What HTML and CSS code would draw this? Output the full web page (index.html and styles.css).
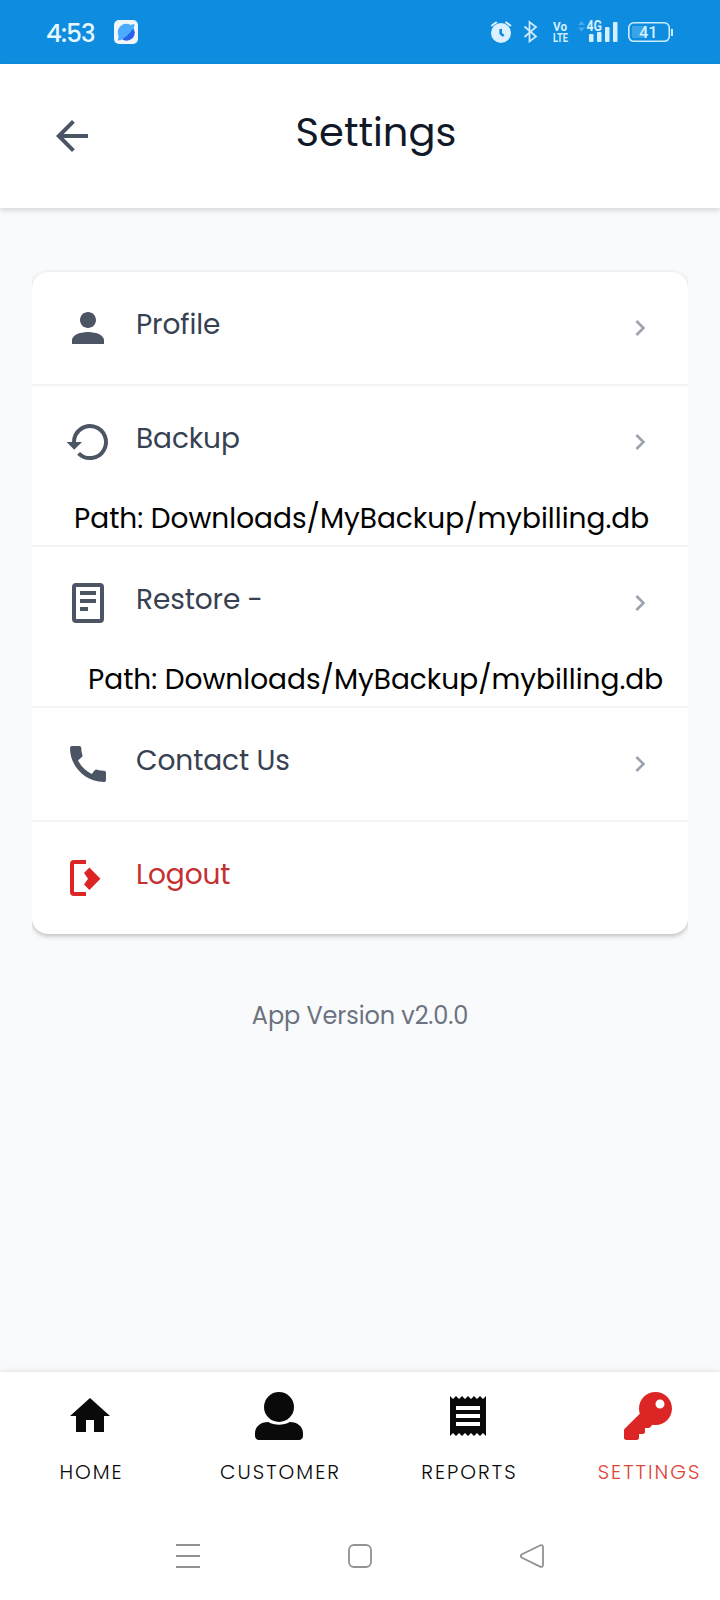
FILE: index.html
```html
<!DOCTYPE html>
<html lang="en">
<head>
    <meta charset="UTF-8">
    <meta name="viewport" content="width=device-width, initial-scale=1.0">
    <title>Settings</title>
    <link rel="stylesheet" href="styles.css">
</head>
<body>
    <div class="status-bar">
        <span class="clock">4:53</span>
        <svg class="app-badge" viewBox="0 0 24 24">
            <rect width="24" height="24" rx="5" fill="#f1f6fb"/>
            <circle cx="12.5" cy="12.5" r="8.3" fill="#2563eb"/>
            <path d="M4.500 15.500A8.400 8.400 0 0 1 16.500 5l3.500-1c1 .5.5 2.500-.7 4.500C16.500 13 11.500 17.500 7 20l-2.500.5c-.8-.6-.8-1.800 0-3z" fill="#4aabff"/>
        </svg>
        <svg class="status-icons" viewBox="490 16 184 32">
            <!-- alarm -->
            <circle cx="501" cy="33" r="10" fill="#dcf1ff"/>
            <path d="M491.300 26l5.500-4M505.500 22l5.500 4" stroke="#dcf1ff" stroke-width="2" fill="none"/>
            <path d="M500.700 29v4.500l3 2.500" stroke="#0e8de0" stroke-width="2.600" fill="none"/>
            <!-- bluetooth -->
            <path d="M524.500 26.500l11.500 10-6.500 5V22l6.500 5-11.500 10" stroke="#cdebff" stroke-width="1.800" fill="none"/>
            <!-- volte -->
            <text class="tiny" x="553" y="31" textLength="14" lengthAdjust="spacingAndGlyphs">Vo</text>
            <text class="tiny" x="553" y="41.500" textLength="15" lengthAdjust="spacingAndGlyphs">LTE</text>
            <!-- signal -->
            <path d="M578 25l3.500-4 3.500 4zM578 27.500l3.500 4 3.500-4z" fill="#49a9e9"/>
            <text class="tiny net" x="586.500" y="31" textLength="15.500" lengthAdjust="spacingAndGlyphs">4G</text>
            <g fill="#d4efff">
                <rect x="589" y="34" width="4.500" height="8" rx="1"/>
                <rect x="597" y="32" width="4.500" height="10" rx="1"/>
                <rect x="605" y="27" width="4.500" height="15" rx="1"/>
                <rect x="613" y="22" width="4.500" height="20" rx="1"/>
            </g>
            <!-- battery -->
            <rect x="632" y="26" width="15" height="12" rx="1" fill="#3ba3e8"/>
            <rect x="628.800" y="22.800" width="40.500" height="18.500" rx="5" fill="none" stroke="#cdebff" stroke-width="1.600"/>
            <path d="M672 29v7" stroke="#cdebff" stroke-width="2"/>
            <text class="level" x="639" y="38" textLength="18.500" lengthAdjust="spacingAndGlyphs">41</text>
        </svg>
    </div>

    <header class="header">
        <svg class="icon" viewBox="0 0 24 24"><path d="M20 11H7.830l5.590-5.590L12 4l-8 8 8 8 1.410-1.410L7.830 13H20v-2z"/></svg>
        <h1>Settings</h1>
    </header>

    <main class="content">
        <ul class="menu">
            <li>
                <a class="row">
                    <svg class="icon" viewBox="0 0 24 24"><path d="M12 12c2.210 0 4-1.790 4-4s-1.790-4-4-4-4 1.790-4 4 1.790 4 4 4zm0 2c-4.420 0-8 1.790-8 4v2h16v-2c0-2.210-3.580-4-8-4z"/></svg>
                    <span class="label">Profile</span>
                    <svg class="chevron" viewBox="0 0 24 24"><path d="M8.590 16.590L13.170 12 8.590 7.410 10 6l6 6-6 6z"/></svg>
                </a>
            </li>
            <li>
                <a class="row">
                    <svg class="icon" viewBox="0 0 24 24"><path d="M5 12.500V12a8 8 0 1 1 2.300 5.650" fill="none" stroke="currentColor" stroke-width="2"/><path d="M1.300 12H9l-3.900 3.900z"/></svg>
                    <span class="label">Backup</span>
                    <svg class="chevron" viewBox="0 0 24 24"><path d="M8.590 16.590L13.170 12 8.590 7.410 10 6l6 6-6 6z"/></svg>
                </a>
                <p class="path">Path: Downloads/MyBackup/mybilling.db</p>
            </li>
            <li>
                <a class="row">
                    <svg class="icon" viewBox="0 0 24 24"><rect x="5" y="3" width="14" height="18" rx="1" fill="none" stroke="currentColor" stroke-width="2"/><path d="M8 6h8v2H8zM8 10h8v2H8zM8 14h4v2H8z"/></svg>
                    <span class="label">Restore -</span>
                    <svg class="chevron" viewBox="0 0 24 24"><path d="M8.590 16.590L13.170 12 8.590 7.410 10 6l6 6-6 6z"/></svg>
                </a>
                <p class="path path-indent">Path: Downloads/MyBackup/mybilling.db</p>
            </li>
            <li>
                <a class="row">
                    <svg class="icon" viewBox="0 0 24 24"><path d="M20.010 15.380c-1.230 0-2.420-.2-3.530-.56a.977.977 0 0 0-1.010.24l-1.570 1.970c-2.830-1.350-5.480-3.900-6.890-6.830l1.950-1.660c.27-.28.35-.67.24-1.020-.37-1.110-.56-2.300-.56-3.530 0-.54-.45-.99-.99-.99H4.190C3.650 3 3 3.240 3 3.990 3 13.280 10.730 21 20.010 21c.71 0 .99-.63.99-1.180v-3.450c0-.54-.45-.99-.99-.99z"/></svg>
                    <span class="label">Contact Us</span>
                    <svg class="chevron" viewBox="0 0 24 24"><path d="M8.590 16.590L13.170 12 8.590 7.410 10 6l6 6-6 6z"/></svg>
                </a>
            </li>
            <li>
                <a class="row logout">
                    <svg class="icon" viewBox="0 0 24 24"><path d="M11 3H5a2 2 0 0 0-2 2v14a2 2 0 0 0 2 2h6v-2H5V5h6z"/><path d="M12.700 6.800L10 9.500l2 2.900-2 2.900 2.700 2.700 5.500-5.600z"/></svg>
                    <span class="label">Logout</span>
                </a>
            </li>
        </ul>
        <p class="version">App Version v2.0.0</p>
    </main>

    <nav class="tabs">
        <a class="tab">
            <svg class="icon" viewBox="0 0 24 24"><path d="M10 20v-6h4v6h5v-8h3L12 3 2 12h3v8z"/></svg>
            <span>Home</span>
        </a>
        <a class="tab">
            <svg class="icon" viewBox="0 0 512 512"><circle cx="256" cy="160" r="160"/><path d="M370 320c-33 19-72 30-114 30s-81-11-114-30C58 320 0 370 0 440v30c0 24 18 42 42 42h428c24 0 42-18 42-42v-30c0-70-58-120-142-120z"/></svg>
            <span>Customer</span>
        </a>
        <a class="tab">
            <svg class="icon" viewBox="0 0 24 24"><path d="M18 17H6v-2h12v2zm0-4H6v-2h12v2zm0-4H6V7h12v2zM3 22l1.500-1.500L6 22l1.500-1.500L9 22l1.500-1.500L12 22l1.500-1.500L15 22l1.500-1.500L18 22l1.500-1.500L21 22V2l-1.500 1.500L18 2l-1.500 1.500L15 2l-1.500 1.500L12 2l-1.500 1.500L9 2 7.500 3.500 6 2 4.500 3.500 3 2v20z"/></svg>
            <span>Reports</span>
        </a>
        <a class="tab active">
            <svg class="icon" viewBox="0 0 512 512"><path d="M512 176.001C512 273.203 433.202 352 336 352c-11.220 0-22.190-1.062-32.827-3.069l-24.012 27.014A23.999 23.999 0 0 1 261.223 384H224v40c0 13.255-10.745 24-24 24h-40v40c0 13.255-10.745 24-24 24H24c-13.255 0-24-10.745-24-24v-78.059c0-6.365 2.529-12.470 7.029-16.971l161.802-161.802C163.108 213.814 160 195.271 160 176 160 78.798 238.797.001 335.999 0 433.488-.001 512 78.511 512 176.001zM336 128c0 26.510 21.490 48 48 48s48-21.490 48-48-21.490-48-48-48-48 21.490-48 48z"/></svg>
            <span>Settings</span>
        </a>
    </nav>

    <div class="system-nav">
        <svg viewBox="0 0 24 24"><path d="M0 1h24M0 12h24M0 23h24"/></svg>
        <svg viewBox="0 0 24 24"><rect x="1" y="1" width="22" height="22" rx="5"/></svg>
        <svg viewBox="0 0 24 24"><path d="M20.500 1.200L2 10.300q-2.400 1.700 0 3.400l18.500 9.100q2.500.5 2.500-2V3.200q0-2.500-2.500-2z"/></svg>
    </div>
</body>
</html>
```
FILE: styles.css
```css
* {
    margin: 0;
    padding: 0;
    box-sizing: border-box;
    font-family: "Poppins", "Inter", sans-serif;
}

body {
    display: flex;
    flex-direction: column;
    height: 1600px;
    overflow: hidden;
    background: #f9fafb;
    color: #000;
}

svg {
    display: block;
    flex: none;
    fill: currentColor;
}

.icon {
    width: 48px;
    height: 48px;
}

.status-bar {
    display: flex;
    align-items: center;
    height: 64px;
    flex: none;
    padding: 0 46px;
    background: #0e8de0;
    color: #e6f8ff;
}

.clock {
    width: 68px;
    padding-top: 2px;
    font-size: 24.5px;
    font-weight: 500;
    letter-spacing: -0.8px;
}

.app-badge {
    width: 24px;
    height: 24px;
}

.status-icons {
    width: 184px;
    height: 32px;
    margin-left: auto;
}

.tiny {
    font-family: Roboto, sans-serif;
    font-size: 13px;
    font-weight: 700;
    fill: #d4efff;
}

.net {
    font-size: 14px;
}

.level {
    font-family: Roboto, sans-serif;
    font-size: 16px;
    font-weight: 500;
    fill: #d4efff;
}

.header {
    display: flex;
    align-items: center;
    height: 144px;
    flex: none;
    padding: 0 64px 0 48px;
    background: #fff;
    color: #4b5563;
    box-shadow: 0 2px 6px rgba(0,0,0,0.16);
}

.header h1 {
    flex: 1;
    padding-bottom: 8px;
    text-align: center;
    font-size: 40px;
    font-weight: 400;
    color: #111827;
}

.content {
    flex: 1;
    padding: 64px 32px 0;
}

.menu {
    list-style: none;
    background: #fff;
    border-radius: 16px;
    box-shadow: 0 2px 5px rgba(0,0,0,0.25);
    clip-path: inset(-4px 0 -10px);
}

.menu li + li {
    border-top: 2px solid #f3f4f6;
}

.row {
    display: flex;
    align-items: center;
    gap: 24px;
    height: 112px;
    padding: 0 32px;
    color: #4b5563;
}

.label {
    flex: 1;
    padding-bottom: 7px;
    font-size: 28px;
    letter-spacing: -0.1px;
    color: #374151;
}

.chevron {
    width: 32px;
    height: 32px;
    color: #9ca3af;
}

.logout {
    color: #dc2626;
}

.logout .label {
    color: #c53030;
}

.path {
    height: 47px;
    padding-left: 42px;
    line-height: 41px;
    font-size: 28px;
    white-space: nowrap;
}

.path-indent {
    padding-left: 56px;
}

.version {
    margin-top: 64px;
    line-height: 35px;
    text-align: center;
    font-size: 24px;
    letter-spacing: -0.1px;
    color: #6b7280;
}

.tabs {
    display: grid;
    grid-template-columns: 180px 198px 180px 162px;
    height: 138px;
    flex: none;
    padding-top: 20px;
    background: #fff;
    box-shadow: 0 -1px 5px rgba(0,0,0,0.1);
}

.tab {
    display: flex;
    flex-direction: column;
    align-items: center;
    gap: 20px;
    color: #0a0a0a;
}

.tab span {
    padding-left: 3px;
    line-height: 25px;
    font-size: 20px;
    font-weight: 300;
    text-transform: uppercase;
    letter-spacing: 2px;
}

.tab.active {
    padding-left: 18px;
    color: #dc2626;
}

.tab.active span {
    color: #de4438;
}

.system-nav {
    display: flex;
    justify-content: center;
    gap: 148px;
    height: 90px;
    flex: none;
    padding-top: 34px;
    background: #fff;
}

.system-nav svg {
    width: 24px;
    height: 24px;
    fill: none;
    stroke: #929292;
    stroke-width: 1.8;
}
```
